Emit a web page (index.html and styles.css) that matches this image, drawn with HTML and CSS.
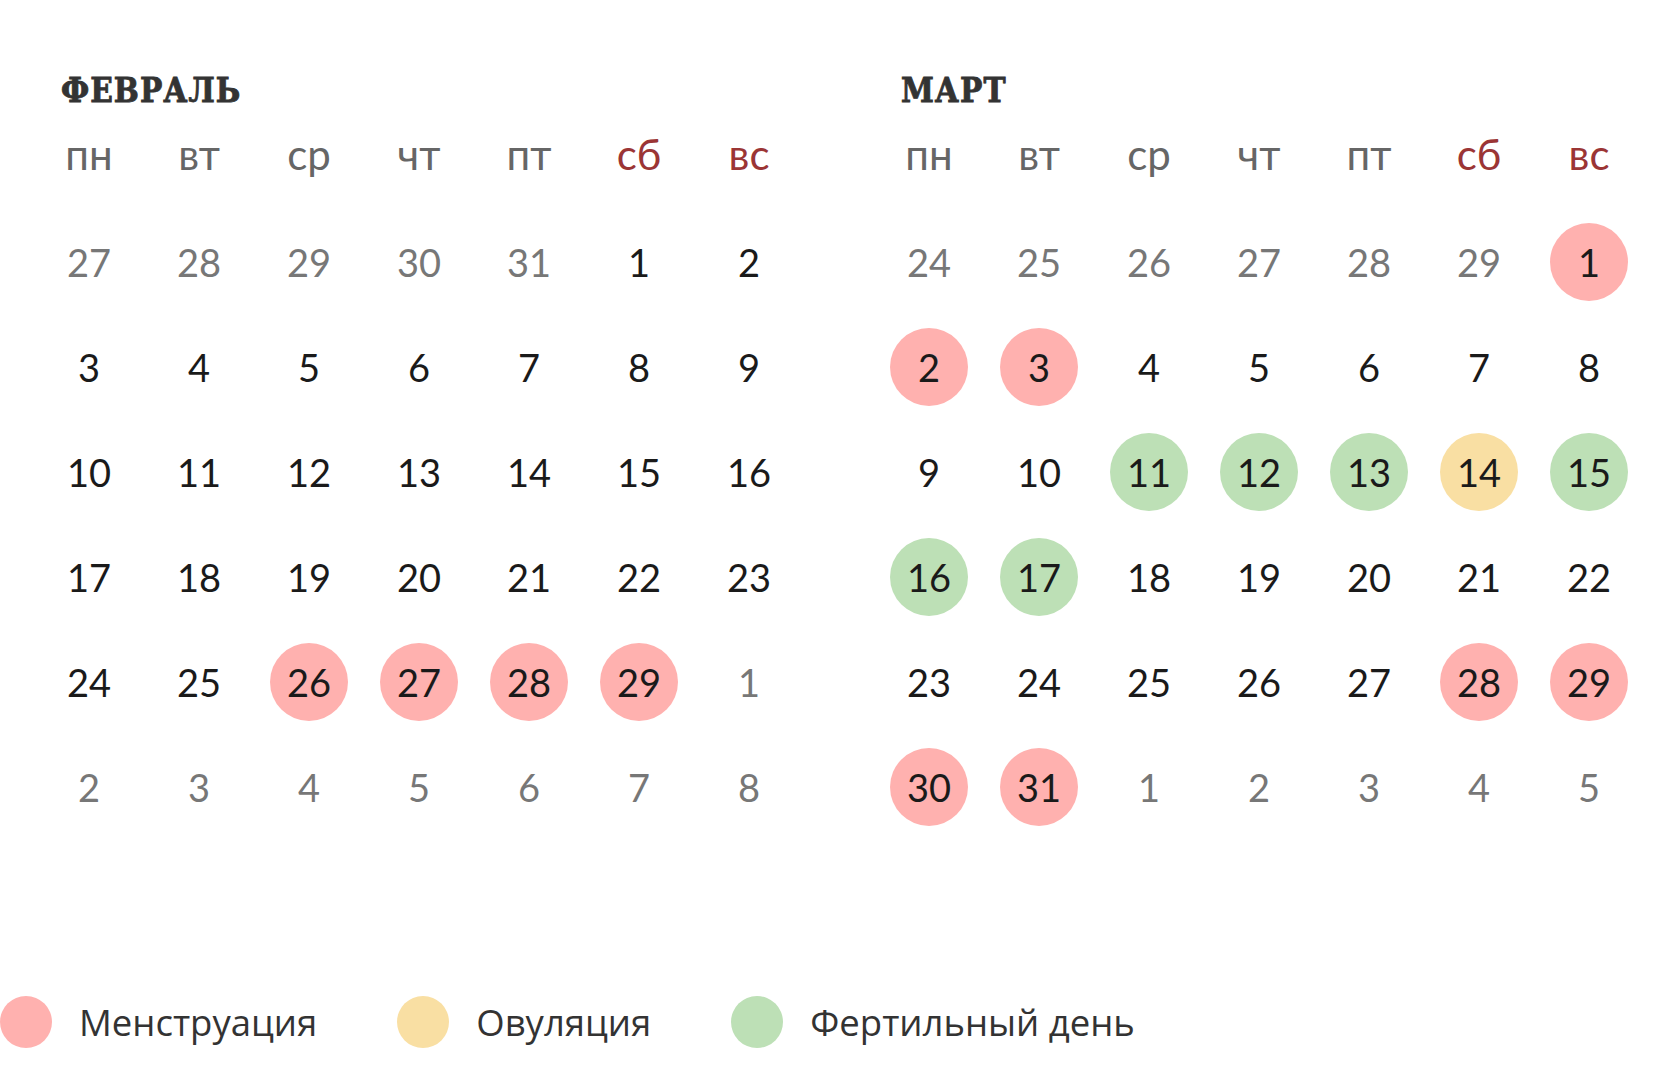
FILE: index.html
```html
<!DOCTYPE html>
<html lang="ru">
<head>
<meta charset="utf-8">
<title>Календарь</title>
<link rel="stylesheet" href="styles.css">
</head>
<body>
<div class="page">
  <div class="months">
    <section class="month">
      <h2 class="title">ФЕВРАЛЬ</h2>
      <div class="grid head">
        <span>пн</span><span>вт</span><span>ср</span><span>чт</span><span>пт</span><span class="we">сб</span><span class="we">вс</span>
      </div>
      <div class="grid days">
        <span class="o">27</span><span class="o">28</span><span class="o">29</span><span class="o">30</span><span class="o">31</span><span>1</span><span>2</span>
        <span>3</span><span>4</span><span>5</span><span>6</span><span>7</span><span>8</span><span>9</span>
        <span>10</span><span>11</span><span>12</span><span>13</span><span>14</span><span>15</span><span>16</span>
        <span>17</span><span>18</span><span>19</span><span>20</span><span>21</span><span>22</span><span>23</span>
        <span>24</span><span>25</span><span class="m">26</span><span class="m">27</span><span class="m">28</span><span class="m">29</span><span class="o">1</span>
        <span class="o">2</span><span class="o">3</span><span class="o">4</span><span class="o">5</span><span class="o">6</span><span class="o">7</span><span class="o">8</span>
      </div>
    </section>
    <section class="month">
      <h2 class="title">МАРТ</h2>
      <div class="grid head">
        <span>пн</span><span>вт</span><span>ср</span><span>чт</span><span>пт</span><span class="we">сб</span><span class="we">вс</span>
      </div>
      <div class="grid days">
        <span class="o">24</span><span class="o">25</span><span class="o">26</span><span class="o">27</span><span class="o">28</span><span class="o">29</span><span class="m">1</span>
        <span class="m">2</span><span class="m">3</span><span>4</span><span>5</span><span>6</span><span>7</span><span>8</span>
        <span>9</span><span>10</span><span class="f">11</span><span class="f">12</span><span class="f">13</span><span class="v">14</span><span class="f">15</span>
        <span class="f">16</span><span class="f">17</span><span>18</span><span>19</span><span>20</span><span>21</span><span>22</span>
        <span>23</span><span>24</span><span>25</span><span>26</span><span>27</span><span class="m">28</span><span class="m">29</span>
        <span class="m">30</span><span class="m">31</span><span class="o">1</span><span class="o">2</span><span class="o">3</span><span class="o">4</span><span class="o">5</span>
      </div>
    </section>
  </div>
  <div class="legend">
    <div class="item"><span class="dot dot-m"></span><span class="label">Менструация</span></div>
    <div class="item"><span class="dot dot-v"></span><span class="label">Овуляция</span></div>
    <div class="item"><span class="dot dot-f"></span><span class="label">Фертильный день</span></div>
  </div>
</div>
</body>
</html>
```
FILE: styles.css
```css
html, body {
  margin: 0;
  padding: 0;
  background: #ffffff;
}

.page {
  width: 1680px;
  height: 1084px;
  overflow: hidden;
  font-family: "Lato", "Open Sans", sans-serif;
  color: #222222;
}

.months {
  display: flex;
  gap: 70px;
  padding: 71px 0 0 34px;
}

.month {
  width: 770px;
}

.title {
  margin: 0 0 0 27px;
  font-family: "DejaVu Serif Condensed", "DejaVu Serif", serif;
  font-weight: bold;
  font-size: 33px;
  line-height: 40px;
  letter-spacing: 1px;
  color: #333333;
  -webkit-text-stroke: 0.8px #333333;
}

.grid {
  display: grid;
  grid-template-columns: repeat(7, 110px);
}

.head {
  height: 98px;
  align-items: center;
}

.head span {
  text-align: center;
  font-family: "Lato", sans-serif;
  font-size: 42px;
  color: #666666;
  line-height: 40px;
  margin-top: -12px;
}

.head .we {
  color: #9b3535;
}

.days {
  grid-auto-rows: 105px;
}

.days span {
  justify-self: center;
  align-self: center;
  width: 78px;
  height: 78px;
  border-radius: 50%;
  display: flex;
  align-items: center;
  justify-content: center;
  font-size: 38px;
  color: #1a1a1a;
}

.days .o {
  color: #777777;
}

.days .m {
  background: #ffb1af;
}

.days .f {
  background: #bde0b6;
}

.days .v {
  background: #f9dfa3;
}

.legend {
  display: flex;
  gap: 80px;
  margin-top: 157px;
  align-items: center;
}

.item {
  display: flex;
  align-items: center;
  gap: 27px;
}

.dot {
  width: 52px;
  height: 52px;
  border-radius: 50%;
}

.dot-m { background: #ffb1af; }
.dot-v { background: #f9dfa3; }
.dot-f { background: #bde0b6; }

.label {
  font-family: "Open Sans", sans-serif;
  font-size: 36.5px;
  color: #333333;
}
```
